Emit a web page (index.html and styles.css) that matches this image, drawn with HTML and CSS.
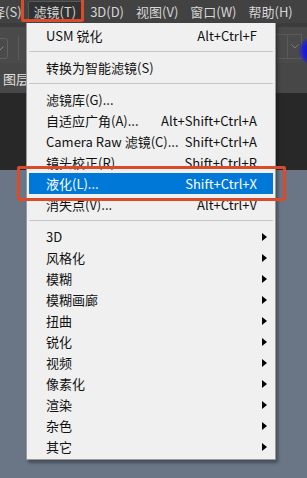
FILE: index.html
```html
<!DOCTYPE html>
<html lang="zh-CN">
<head>
  <meta charset="UTF-8" />
  <meta name="viewport" content="width=device-width, initial-scale=1.0"/>
  <title>滤镜菜单</title>
  <link rel="stylesheet" href="styles.css">
</head>
<body>
  <div class="menubar">
    <span class="mb-item first">选择(S)</span>
    <span class="mb-item active">滤镜(T)</span>
    <span class="mb-item">3D(D)</span>
    <span class="mb-item">视图(V)</span>
    <span class="mb-item">窗口(W)</span>
    <span class="mb-item">帮助(H)</span>
  </div>

  <div class="optionsbar">
    <div class="opt-left">
      <span class="combo">
        <svg width="8" height="5" viewBox="0 0 8 5"><path d="M0.5 0.5 L4 4 L7.5 0.5" fill="none" stroke="#8a8a8a" stroke-width="1"/></svg>
      </span>
      <span class="vsep"></span>
    </div>
    <div class="opt-right">
      <span class="combo2">
        <span class="cell"></span>
        <span class="cell">
          <svg width="8" height="5" viewBox="0 0 8 5"><path d="M0.5 0.5 L4 4 L7.5 0.5" fill="none" stroke="#7a7a7a" stroke-width="1"/></svg>
        </span>
      </span>
    </div>
    <span class="glow"></span>
  </div>

  <div class="tabbar"><span class="tab">图层</span></div>
  <div class="workspace"></div>
  <div class="canvas"></div>

  <div class="dropdown">
    <div class="item"><span class="label">USM 锐化</span><span class="keys">Alt+Ctrl+F</span></div>
    <div class="sep"></div>
    <div class="item"><span class="label">转换为智能滤镜(S)</span></div>
    <div class="sep"></div>
    <div class="item"><span class="label">滤镜库(G)...</span></div>
    <div class="item"><span class="label">自适应广角(A)...</span><span class="keys">Alt+Shift+Ctrl+A</span></div>
    <div class="item"><span class="label">Camera Raw 滤镜(C)...</span><span class="keys">Shift+Ctrl+A</span></div>
    <div class="item"><span class="label">镜头校正(R)...</span><span class="keys">Shift+Ctrl+R</span></div>
    <div class="item selected"><span class="label">液化(L)...</span><span class="keys">Shift+Ctrl+X</span></div>
    <div class="item"><span class="label">消失点(V)...</span><span class="keys">Alt+Ctrl+V</span></div>
    <div class="sep"></div>
    <div class="item sub"><span class="label">3D</span><span class="arrow"></span></div>
    <div class="item sub"><span class="label">风格化</span><span class="arrow"></span></div>
    <div class="item sub"><span class="label">模糊</span><span class="arrow"></span></div>
    <div class="item sub"><span class="label">模糊画廊</span><span class="arrow"></span></div>
    <div class="item sub"><span class="label">扭曲</span><span class="arrow"></span></div>
    <div class="item sub"><span class="label">锐化</span><span class="arrow"></span></div>
    <div class="item sub"><span class="label">视频</span><span class="arrow"></span></div>
    <div class="item sub"><span class="label">像素化</span><span class="arrow"></span></div>
    <div class="item sub"><span class="label">渲染</span><span class="arrow"></span></div>
    <div class="item sub"><span class="label">杂色</span><span class="arrow"></span></div>
    <div class="item sub"><span class="label">其它</span><span class="arrow"></span></div>
  </div>

  <!-- annotation boxes -->
  <div class="mark mark-menu"></div>
  <div class="mark mark-item"></div>
</body>
</html>
```

FILE: styles.css
```css
body {
  margin: 0;
  width: 307px;
  height: 478px;
  overflow: hidden;
  position: relative;
  background: #6a7686;
  font-family: "Noto Sans CJK SC", sans-serif;
  font-size: 13px;
}
.menubar {
  height: 23px;
  background: #424242;
  display: flex;
  align-items: center;
  color: #d6d6d6;
  white-space: nowrap;
}
.mb-item {
  padding: 0 5px;
  line-height: 19px;
  border: 1px solid transparent;
}
.mb-item.first {
  margin: 0 6px 0 -21px;
  padding: 0;
  border: none;
}
.mb-item.active {
  background: #323232;
  border-color: #585858;
  border-radius: 2px;
  padding: 0 7px 0 5px;
}
.optionsbar {
  height: 36px;
  background: #4a4a4a;
  border-top: 4px solid #3c3c3c;
  display: flex;
  justify-content: space-between;
  align-items: center;
  position: relative;
  overflow: hidden;
}
.opt-left {
  display: flex;
  align-items: center;
  gap: 10px;
  margin-left: -20px;
  margin-top: 6px;
}
.combo {
  width: 28px;
  height: 21px;
  border: 1px solid #626262;
  border-radius: 3px;
  display: flex;
  align-items: center;
  justify-content: flex-end;
  padding-right: 3px;
  box-sizing: border-box;
}
.vsep {
  width: 1px;
  height: 24px;
  background: #5c5c5c;
}
.opt-right {
  margin-right: 5px;
  margin-top: 2px;
}
.combo2 {
  display: flex;
  height: 25px;
  border: 1px solid #5a5a5a;
  box-sizing: border-box;
}
.combo2 .cell {
  width: 13px;
  display: flex;
  align-items: center;
  justify-content: center;
}
.combo2 .cell + .cell {
  border-left: 1px solid #5a5a5a;
}
.glow {
  position: absolute;
  left: 299px;
  top: 10px;
  width: 28px;
  height: 28px;
  border-radius: 50%;
  background: radial-gradient(circle, #1010e0 0%, #1a1ad8 45%, rgba(40, 40, 200, 0.4) 70%, rgba(74, 74, 74, 0) 100%);
}
.tabbar {
  height: 30px;
  background: #474747;
  display: flex;
  align-items: center;
  color: #e0e0e0;
  overflow: hidden;
}
.tab {
  margin-left: 3px;
  white-space: nowrap;
}
.workspace {
  height: 77px;
  background: #282828;
}
.dropdown {
  position: absolute;
  left: 26px;
  top: 23px;
  width: 250px;
  box-sizing: border-box;
  padding: 2px 0;
  background: #f0f0f0;
  border: 1px solid #9a9a9a;
  border-top: none;
  box-shadow: 2px 3px 3px rgba(0, 0, 0, 0.35);
  color: #111;
}
.item {
  height: 21px;
  margin: 0 2px;
  padding: 0 16px 0 17px;
  display: flex;
  align-items: center;
  justify-content: space-between;
  white-space: nowrap;
}
.item.selected {
  background: #0078d7;
  color: #fff;
}
.item.sub {
  padding-right: 6px;
}
.arrow {
  width: 0;
  height: 0;
  border-top: 4.5px solid transparent;
  border-bottom: 4.5px solid transparent;
  border-left: 5px solid #000;
}
.sep {
  height: 1px;
  margin: 5px 2px 5px 2px;
  background: #c6c6c6;
}
.mark {
  position: absolute;
  border: 3.5px solid #db4a2b;
  border-radius: 2px;
}
.mark-menu {
  left: 21px;
  top: -6px;
  width: 57px;
  height: 22px;
}
.mark-item {
  left: 17px;
  top: 166px;
  width: 263px;
  height: 29px;
}
```
